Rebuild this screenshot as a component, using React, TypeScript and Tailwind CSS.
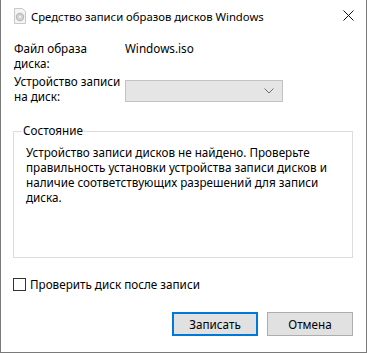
import React from "react";

export default function App() {
  return (
    <div
      className="w-[367px] h-[353px] bg-white border-x border-b border-[#7a7a7a] text-black text-[12px] leading-[15px] flex flex-col overflow-hidden"
      style={{ fontFamily: '"Noto Sans", "Open Sans", sans-serif' }}
    >
      {/* title bar */}
      <div className="h-[31px] flex items-center shrink-0">
        <div className="ml-[11px] w-[16px] h-[16px] flex items-center justify-center">
          <svg width="14" height="16" viewBox="0 0 14 16">
            <path d="M1.5 0.5h8l3 3v12h-11z" fill="#f4f4f4" stroke="#c8c8c8" />
            <circle cx="7" cy="9" r="4.2" fill="#b9b9b9" />
            <circle cx="7" cy="9" r="3" fill="#d5d5d5" />
            <circle cx="7" cy="9" r="1" fill="#f4f4f4" />
          </svg>
        </div>
        <div className="ml-[3px] mt-[1px] text-[11.3px]">Средство записи образов дисков Windows</div>
        <div className="ml-auto mr-[12px] w-[12px] h-[12px] flex items-center justify-center">
          <svg width="11" height="11" viewBox="0 0 11 11">
            <path d="M0.5 0.5L10.5 10.5M10.5 0.5L0.5 10.5" stroke="#111" strokeWidth="1" />
          </svg>
        </div>
      </div>

      {/* content */}
      <div className="flex flex-col px-[12px] pt-[10px] text-[11.7px]">
        <div className="flex">
          <div className="w-[112px] pl-[1px] whitespace-pre-line">{"Файл образа\nдиска:"}</div>
          <div>Windows.iso</div>
        </div>
        <div className="flex mt-[3px]">
          <div className="w-[112px] pl-[1px] whitespace-pre-line">{"Устройство записи\nна диск:"}</div>
          <div className="mt-[6px] w-[158px] h-[22px] bg-[#e5e5e5] border border-[#c2c2c2] flex items-center justify-end pr-[8px]">
            <svg width="10" height="6" viewBox="0 0 10 6">
              <path d="M0.5 0.5L5 5L9.5 0.5" fill="none" stroke="#6d6d6d" strokeWidth="1" />
            </svg>
          </div>
        </div>

        {/* group box */}
        <div className="relative mt-[27px] mr-[1px] h-[127px] border border-[#dcdcdc]">
          <div className="absolute left-[8px] top-[-9px] bg-white px-[1px] leading-[15px]">Состояние</div>
          <div className="pl-[12px] pr-[10px] pt-[13px] leading-[15px]">
            Устройство записи дисков не найдено. Проверьте правильность установки устройства записи дисков и
            наличие соответствующих разрешений для записи диска.
          </div>
        </div>

        {/* checkbox */}
        <div className="flex items-center mt-[19px]">
          <div className="w-[13px] h-[13px] border border-[#333] bg-white" />
          <div className="ml-[4px]">Проверить диск после записи</div>
        </div>

        {/* buttons */}
        <div className="flex justify-end mt-[20px] gap-[9px] mr-[1px]">
          <div className="w-[86px] h-[24px] bg-[#e1e1e1] border-2 border-[#0078d7] flex items-center justify-center">
            Записать
          </div>
          <div className="w-[86px] h-[24px] bg-[#e1e1e1] border border-[#adadad] flex items-center justify-center">
            Отмена
          </div>
        </div>
      </div>
    </div>
  );
}
